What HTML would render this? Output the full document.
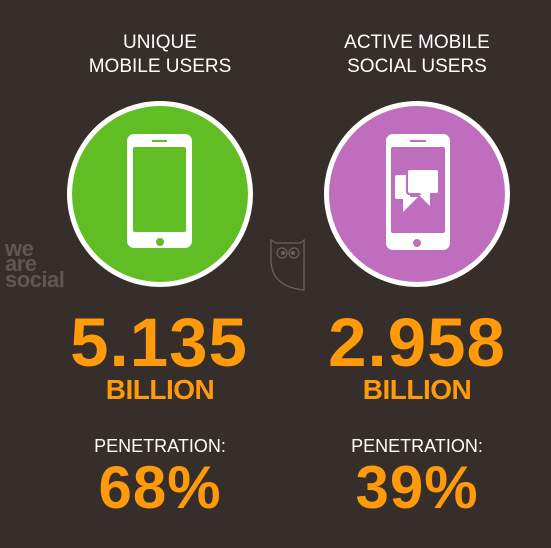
<!DOCTYPE html>
<html><head><style>
body{margin:0;width:551px;height:548px;background:#352e2a;overflow:hidden;position:relative;font-family:"Liberation Sans",sans-serif}
.t{position:absolute;text-align:center;width:260px}
.h{color:#fff;font-size:19px;line-height:24px}
.n{color:#ff9a0a;font-weight:bold;font-size:69px;line-height:60px;letter-spacing:1px}
.b{color:#ff9a0a;font-weight:bold;font-size:28px;line-height:30px;letter-spacing:-0.5px}
.p{color:#fff;font-size:18px;line-height:20px}
.pc{color:#ff9a0a;font-weight:bold;font-size:60px;line-height:50px;letter-spacing:1px}
</style></head><body>
<div class="t h" style="left:30px;top:31px">UNIQUE<br>MOBILE USERS</div>
<div class="t h" style="left:287px;top:31px">ACTIVE MOBILE<br>SOCIAL USERS</div>
<svg width="551" height="548" style="position:absolute;left:0;top:0">
<circle cx="160" cy="194" r="93" fill="#fff"/><circle cx="160" cy="194" r="88" fill="#60bd24"/>
<rect x="127" y="134" width="65" height="114" rx="7" fill="#fff"/>
<rect x="133" y="147" width="53" height="85" rx="2" fill="#60bd24"/>
<rect x="152" y="140" width="15" height="2" fill="#60bd24"/>
<circle cx="160" cy="242" r="4" fill="#60bd24"/>
<circle cx="417" cy="194" r="93" fill="#fff"/><circle cx="417" cy="194" r="88" fill="#bf6ebe"/>
<rect x="386" y="134" width="64" height="116" rx="7" fill="#fff"/>
<rect x="391" y="147" width="54" height="86" rx="2" fill="#bf6ebe"/>
<rect x="410" y="140" width="16" height="2" fill="#bf6ebe"/>
<circle cx="417" cy="243" r="4" fill="#bf6ebe"/>
<rect x="395" y="175" width="15" height="24" rx="2" fill="#fff"/>
<path d="M403 197v15l15-15z" fill="#fff"/>
<path d="M418 194l12 12v-12z" fill="#fff"/>
<rect x="406" y="168" width="34" height="27" rx="3" fill="#bf6ebe"/>
<rect x="408" y="170" width="30" height="23" rx="2" fill="#fff"/>
<path d="M419 192l11 13v-13z" fill="#fff"/>
<g fill="none" stroke="#6a625d" stroke-width="1.3">
<path d="M271 240v20c0 18 12 28 33 30v-50l-4 3h-24z"/>
<circle cx="282" cy="253" r="5"/><circle cx="294" cy="253" r="5"/>
</g>
<circle cx="283" cy="253" r="2" fill="#6a625d"/><circle cx="293" cy="253" r="2" fill="#6a625d"/>
<g fill="#5f5753" font-family="Liberation Sans" font-weight="bold" font-size="22" letter-spacing="-0.5">
<text x="5" y="256">we</text>
<text x="5" y="271">are</text>
<text x="5" y="287">social</text>
</g>
</svg>
<div class="t n" style="left:29px;top:313px">5.135</div>
<div class="t n" style="left:287px;top:313px">2.958</div>
<div class="t b" style="left:30px;top:375px">BILLION</div>
<div class="t b" style="left:287px;top:375px">BILLION</div>
<div class="t p" style="left:30px;top:436px">PENETRATION:</div>
<div class="t p" style="left:287px;top:436px">PENETRATION:</div>
<div class="t pc" style="left:30px;top:463px">68%</div>
<div class="t pc" style="left:287px;top:463px">39%</div>
</body></html>
